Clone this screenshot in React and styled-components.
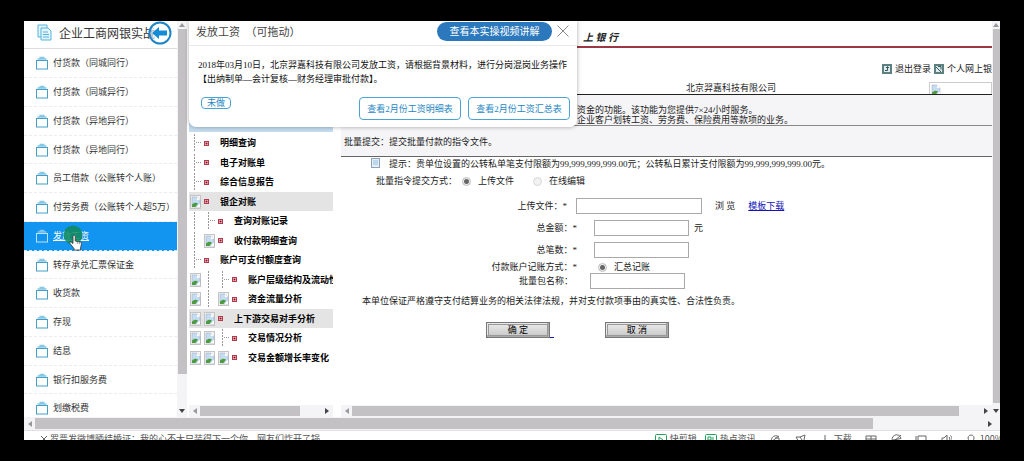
import React, { useState } from 'react';
import styled, { createGlobalStyle } from 'styled-components';

const GlobalStyle = createGlobalStyle`
  * { box-sizing: border-box; }
  body {
    margin: 0;
    background: #000;
    color: #222;
    font-family: "Liberation Serif", "Noto Sans CJK SC", sans-serif;
    font-size: 9px;
    line-height: 10px;
  }
  ul { list-style: none; margin: 0; padding: 0; }
  a { color: inherit; text-decoration: none; }
  h1, h2, p { margin: 0; font-weight: normal; }
  input, button { font: inherit; margin: 0; }
  svg { display: block; flex: none; }
`

const Page = styled.div`
  height: 100vh;
  padding: 21px 24px;
`

const Screen = styled.div`
  position: relative;
  display: flex;
  flex-direction: column;
  height: 100%;
  overflow: hidden;
  background: #fff;
`

const Frames = styled.div`
  flex: 1;
  display: flex;
  min-height: 0;
`

/* scroll bars */

const Bar = styled.div`
  flex: none;
  display: flex;
  align-items: center;
  overflow: hidden;
  background: #f4f3f5;
  flex-direction: ${props => props.$vertical ? 'column' : 'row'};
  ${props => props.$vertical ? 'width' : 'height'}: ${props => props.$size}px;
`

const Thumb = styled.div`
  align-self: stretch;
  flex: ${props => props.$grow};
  margin: ${props => props.$vertical ? '0 0 0 1px' : '1px 0'};
  background: #c3c1c4;
`

const Rest = styled.div`
  flex: ${props => props.$grow};
`

const ArrowCell = styled.div`
  flex: none;
  display: flex;
  align-items: center;
  justify-content: center;
  ${props => props.$vertical ? 'height' : 'width'}: ${props => props.$size}px;
`

const arrows = {
  left: 'M5 0 L1 3 L5 6 Z',
  right: 'M1 0 L5 3 L1 6 Z',
  up: 'M0 5 L3 1 L6 5 Z',
  down: 'M0 1 L6 1 L3 5 Z',
}

const Arrow = ({ dir, dim }) => (
  <svg width="6" height="6" viewBox="0 0 6 6"><path d={arrows[dir]} fill={dim ? '#999' : '#444'} /></svg>
)

const HScroll = ({ size, thumb, rest, end }) => (
  <Bar $size={size}>
    <ArrowCell $size={11}><Arrow dir="left" dim /></ArrowCell>
    <Thumb $grow={thumb} />
    <Rest $grow={rest} />
    <ArrowCell $size={end}><Arrow dir="right" /></ArrowCell>
  </Bar>
)

const VScroll = ({ size, thumb, rest }) => (
  <Bar $vertical $size={size}>
    <ArrowCell $vertical $size={8}><Arrow dir="up" dim /></ArrowCell>
    <Thumb $vertical $grow={thumb} />
    <Rest $grow={rest} />
    <ArrowCell $vertical $size={13}><Arrow dir="down" /></ArrowCell>
  </Bar>
)

/* left menu */

const Sidebar = styled.nav`
  flex: none;
  width: 153px;
  overflow: hidden;
  font-family: "Noto Sans CJK SC", sans-serif;
`

const SidebarHead = styled.div`
  position: relative;
  display: flex;
  align-items: center;
  gap: 7px;
  height: 28px;
  padding: 0 0 4px 13px;
  border-bottom: 1px solid #dcdcdc;
`

const SidebarTitle = styled.h1`
  font-size: 12px;
  line-height: 16px;
  white-space: nowrap;
  color: #333;
`

const BackButton = styled.button`
  position: absolute;
  left: 124px;
  top: 0;
  padding: 0;
  border: 0;
  background: none;
  cursor: pointer;
`

const MenuLink = styled.a`
  position: relative;
  display: flex;
  align-items: center;
  gap: 5px;
  height: 29px;
  padding-left: 12px;
  white-space: nowrap;
  border-bottom: 1px dashed ${props => props.$active ? '#cfe6fa' : '#ececec'};
  background: ${props => props.$active ? '#1295f0' : 'none'};
  color: ${props => props.$active ? '#fff' : '#333'};
  span { text-decoration: ${props => props.$active ? 'underline' : 'none'}; }
  li:nth-child(4n) & { height: 28px; }
`

const Pointer = styled.div`
  position: absolute;
  left: 39px;
  top: 2px;
`

/* tree frame */

const TreeFrame = styled.div`
  flex: none;
  display: flex;
  flex-direction: column;
  width: 144px;
  margin: 0 8px 0 2px;
`

const Tree = styled.ul`
  flex: 1;
  min-height: 0;
  overflow: hidden;
  padding-top: 93px;
`

const TreeSelected = styled.li`
  height: 18px;
  margin-bottom: 1px;
  background: #c3dcf0;
`

const TreeRow = styled.li`
  display: flex;
  align-items: center;
  height: 19px;
  padding-left: 1px;
  white-space: nowrap;
  font-weight: bold;
  color: #000;
  background: ${props => props.$shaded ? '#e4e4e4' : 'none'};
  &:nth-child(2n) { height: 20px; }
`

const Cell = styled.span`
  flex: none;
  display: flex;
  align-items: center;
  align-self: stretch;
  width: ${props => props.$wide ? 16 : 14}px;
`

/* main frame */

const ContentFrame = styled.div`
  flex: 1;
  display: flex;
  min-width: 0;
`

const ContentColumn = styled.div`
  flex: 1;
  display: flex;
  flex-direction: column;
  min-width: 0;
`

const Content = styled.main`
  flex: 1;
  min-height: 0;
  overflow: hidden;
`

const BankTitle = styled.div`
  height: 27px;
  padding: 11px 0 0 242px;
  border-bottom: 2px solid #9c3843;
  font: italic bold 10px/12px "Liberation Serif", "Noto Sans CJK SC", serif;
`

const UserLinks = styled.div`
  display: flex;
  align-items: center;
  justify-content: flex-end;
  gap: 3px;
  height: 14px;
  margin: 14px -9px 6px 0;
  white-space: nowrap;
`

const CompanyRow = styled.div`
  display: grid;
  grid-template-columns: 1fr auto 153px 63px;
  align-items: center;
  height: 13px;
  border-bottom: 1px solid #222;
`

const PhotoFrame = styled.div`
  grid-column: 4;
  height: 12px;
  overflow: hidden;
  border: 1px solid #ccc;
  border-bottom: 0;
`

const Intro = styled.div`
  padding: 10px 0 0 236px;
  background: #f5f4f7;
  border-bottom: 1px solid #888;
  white-space: nowrap;
`

const Notice = styled.div`
  padding: 11px 0 9px 3px;
  background: #f5f4f7;
  border-bottom: 1px solid #666;
`

const Hint = styled.div`
  display: flex;
  align-items: center;
  gap: 7px;
  height: 14px;
  padding-left: 29px;
  white-space: nowrap;
`

const ModeRow = styled.div`
  display: flex;
  align-items: center;
  height: 20px;
  padding-left: 35px;
  margin-bottom: 4px;
`

const Field = styled.div`
  display: grid;
  grid-template-columns: ${props => props.$label}px auto auto 1fr;
  align-items: center;
  column-gap: ${props => props.$gap}px;
  height: ${props => props.$height || 22}px;
`

const FieldLabel = styled.label`
  text-align: right;
  white-space: nowrap;
`

const TextBox = styled.input`
  width: ${props => props.$wide ? 126 : 95}px;
  height: 16px;
  padding: 0 2px;
  border: 1px solid #a9a9a9;
  background: #fff;
`

const Unit = styled.span`
  margin-left: -12px;
`

const Browse = styled.button`
  margin: 0 0 0 4px;
  padding: 0;
  border: 0;
  background: none;
  color: #222;
  cursor: pointer;
`

const Download = styled.a`
  color: #1414b8;
  text-decoration: underline;
  margin-left: 4px;
`

const Choice = styled.div`
  display: flex;
  align-items: center;
`

const Radio = styled.input`
  appearance: none;
  width: 9px;
  height: 9px;
  margin: 0 7px 0 ${props => props.$lead || 0}px;
  border: 1px solid ${props => props.disabled ? '#d8d8d8' : '#bbb'};
  border-radius: 50%;
  background: #f1f1f1;
  &:checked { background: radial-gradient(circle, #666 0 2px, #eee 3px); }
`

const Pledge = styled.p`
  margin: 7px 0 16px 21px;
  white-space: nowrap;
`

const Actions = styled.div`
  display: flex;
  align-items: flex-end;
  padding-left: 145px;
`

const FormButton = styled.button`
  width: 64px;
  height: 16px;
  padding: 0;
  border: 1px solid #777;
  outline: 1px solid #999;
  outline-offset: -3px;
  background: linear-gradient(#ececec, #c6c6c6);
  color: #000;
  line-height: 12px;
  box-shadow: inset -2px -2px 0 #aaa, inset 2px 2px 0 #e8e8e8;
`

const EmptyLink = styled.a`
  width: 4px;
  margin-right: 51px;
  border-bottom: 1px solid #1414b8;
`

/* task dialog */

const Dialog = styled.section`
  position: absolute;
  left: 165px;
  top: 0;
  width: 388px;
  border-radius: 0 0 7px 7px;
  background: #fff;
  box-shadow: 0 0 4px rgba(0, 0, 0, 0.35);
`

const DialogHead = styled.header`
  display: flex;
  align-items: center;
  height: 25px;
  padding: 0 8px 4px 7px;
  border-bottom: 1px solid #eaeaea;
  h2 { flex: 1; font: 11px/14px "Noto Sans CJK SC", sans-serif; color: #444; }
`

const VideoButton = styled.button`
  width: 115px;
  height: 19px;
  padding: 0;
  border: 0;
  border-radius: 10px;
  background: #2b78bd;
  color: #fff;
  font: 10px/16px "Noto Sans CJK SC", sans-serif;
`

const CloseButton = styled.button`
  margin-left: 5px;
  padding: 0;
  border: 0;
  background: none;
`

const DialogText = styled.p`
  padding: 12px 0 0 9px;
  line-height: 14px;
  white-space: nowrap;
  color: #111;
`

const DialogFoot = styled.footer`
  display: flex;
  align-items: flex-start;
  gap: 7px;
  padding: 11px 7px 7px 12px;
`

const Tag = styled.span`
  margin-right: auto;
  padding: 0 5px;
  border: 1px solid #4ba3d3;
  border-radius: 4px;
  color: #1f87c4;
`

const OutlineButton = styled.button`
  width: 102px;
  height: 23px;
  padding: 0;
  border: 1px solid #4ba3d3;
  border-radius: 4px;
  background: #fff;
  color: #1f87c4;
  white-space: nowrap;
`

/* browser status line */

const StatusBar = styled.footer`
  flex: none;
  height: 10px;
  overflow: hidden;
  border-top: 1px solid #e2e0e4;
  color: #555;
  font-family: "Noto Sans CJK SC", sans-serif;
`

const StatusLine = styled.div`
  display: flex;
  align-items: center;
  justify-content: space-between;
  height: 16px;
  padding-left: 14px;
  margin-right: -3px;
  white-space: nowrap;
`

const StatusGroup = styled.div`
  display: flex;
  align-items: center;
  gap: ${props => props.$gap}px;
`

/* icons */

const DocsIcon = () => (
  <svg width="15" height="17" viewBox="0 0 15 17" fill="#e3f4fb" stroke="#55b4dc">
    <path d="M1 1h9v12H1z" />
    <path d="M4 4h7l3 3v9H4z" />
    <path d="M6 8h5M6 10.500h6M6 13h6" />
  </svg>
)

const FolderIcon = ({ active }) => (
  <svg width="12" height="14" viewBox="0 0 12 14" fill="none">
    <path d="M3.500 1.500h5M1.500 3h9" stroke={active ? '#7cc6f8' : '#86c8e4'} strokeWidth="1.500" />
    <rect x="0.500" y="4.500" width="11" height="8.500" stroke={active ? '#bfe2fb' : '#459fc6'} />
  </svg>
)

const BackIcon = () => (
  <svg width="24" height="24" viewBox="0 0 24 24">
    <circle cx="12" cy="12" r="10.500" fill="#fff" fillOpacity="0.6" stroke="#1c86c8" strokeWidth="2" />
    <path d="M4 12l7-6v3.500h8v5h-8V18z" fill="#148cd6" />
  </svg>
)

const HandPointer = () => (
  <svg width="24" height="28" viewBox="0 0 24 28">
    <circle cx="10" cy="11" r="9.500" fill="#0e8a5a" fillOpacity="0.85" />
    <path d="M10 12.500c0-1.600 2.200-1.600 2.200 0v4.500l5 1c1 .3 1.300 1 1.200 2l-.8 4v2H11v-1.500l-4-5c-.8-1.200.6-2 1.500-1.200L10 19.500z" fill="#fff" stroke="#333" strokeWidth="0.8" />
    <path d="M14.300 17.500v2.500M16.300 18v2.200" stroke="#555" strokeWidth="0.6" />
  </svg>
)

const BrokenImage = ({ bare }) => (
  <svg width="12" height="14" viewBox="0 0 12 14">
    {!bare && <rect x="0.500" y="0.500" width="10" height="13" fill="#f4f4f4" stroke="#c4c4c4" />}
    <path d="M2 2h5l3 3v7H2z" fill="#c5dcf3" stroke="#9aaabb" strokeWidth="0.5" />
    <path d="M7 2v3h3z" fill="#fff" />
    <path d="M2 12V9.500c2-2 4-2.500 6-1L5.500 12z" fill="#4c9c3f" />
    <path d="M6.500 12L10 8.500V12z" fill="#fff" />
  </svg>
)

const HintIcon = () => (
  <svg width="12" height="12" viewBox="0 0 12 12">
    <rect x="1.500" y="0.500" width="8" height="9" fill="#e4eef8" stroke="#8fa3b8" />
    <path d="M3 2h5v5H3z" fill="#bcd6ee" />
  </svg>
)

const TreeLine = ({ branch }) => (
  <svg width="14" height="18" viewBox="0 0 14 18" stroke="#999" strokeDasharray="2 1">
    <path d="M4.500 0v18" />
    {branch && <path d="M6 8.500h6" strokeDasharray="1 1" />}
  </svg>
)

const NodeIcon = () => (
  <svg width="5" height="5" viewBox="0 0 5 5">
    <rect x="0.500" y="0.500" width="4" height="4" fill="#fbe3e6" stroke="#b33a4a" />
    <rect x="1.500" y="1.500" width="2" height="2" fill="#8b0f20" />
  </svg>
)

const LinkIcon = ({ flip }) => (
  <svg width="10" height="10" viewBox="0 0 10 10">
    <rect width="10" height="10" fill="#5d8080" />
    <rect x="2" y="2" width="6" height="6" fill="#dfeaea" />
    <path d={flip ? 'M2 3l5 5M4 2.500h3v3' : 'M3 6.500h2.500V3M4 4l1.500-1.500L7 4'} stroke="#33595b" fill="none" />
  </svg>
)

const CloseIcon = () => (
  <svg width="12" height="12" viewBox="0 0 12 12"><path d="M0.500 0.500l11 11M11.500 0.500l-11 11" stroke="#888" /></svg>
)

const statusShapes = {
  close: 'M3 3l6 6M9 3l-6 6',
  speed: 'M11 9a4.500 4.500 0 1 1-1-5M2 9l8-6M6 5h4v6',
  rocket: 'M2 4h4l5-2-1 5-4 4zM6 4l2 3M3 9l-1 2',
  download: 'M6 2v8M3 7l3 3 3-3M1 8v4h10V8',
  shield: 'M1 3h10v5H1zM6 3v8M1 6h10',
  globe: 'M10.500 8.500a4.500 4.500 0 1 1 .5-3L3 7M2 10L11 2',
  window: 'M3 3h8v9H3zM1 3v6',
  sound: 'M2 5h2l3-3v9L4 8H2zM9 4c1 1 1 3 0 5M10.500 2.500c2 2 2 6 0 8',
  zoom: 'M6 2a3 3 0 1 0 .1 0M6 8v4',
}

const StatusIcon = ({ name }) => (
  <svg width="12" height="12" viewBox="0 0 12 12" fill="none" stroke="#666"><path d={statusShapes[name]} /></svg>
)

const GreenIcon = ({ d }) => (
  <svg width="12" height="12" viewBox="0 0 12 12" fill="none" stroke="#1fa35a">
    <rect x="0.500" y="1.500" width="11" height="10" rx="1" />
    <path d={d} />
  </svg>
)

const menu = [
  '付货款（同城同行）',
  '付货款（同城异行）',
  '付货款（异地异行）',
  '付货款（异地同行）',
  '员工借款（公账转个人账）',
  '付劳务费（公账转个人超5万）',
  '发放工资',
  '转存承兑汇票保证金',
  '收货款',
  '存现',
  '结息',
  '银行扣服务费',
  '划缴税费',
]

// prefix: b = branch, l = line, i = image
const tree = [
  { prefix: 'b', text: '明细查询' },
  { prefix: 'b', text: '电子对账单' },
  { prefix: 'b', text: '综合信息报告' },
  { prefix: 'i', text: '银企对账', shaded: true },
  { prefix: 'lb', text: '查询对账记录' },
  { prefix: 'li', text: '收付款明细查询' },
  { prefix: 'b', text: '账户可支付额度查询' },
  { prefix: 'ilb', text: '账户层级结构及流动性' },
  { prefix: 'ili', text: '资金流量分析' },
  { prefix: 'ii', text: '上下游交易对手分析', shaded: true },
  { prefix: 'iib', text: '交易情况分析' },
  { prefix: 'iii', text: '交易金额增长率变化' },
]

const Menu = () => {
  const [ active, setActive ] = useState(6)

  return (
    <Sidebar>
      <SidebarHead>
        <DocsIcon />
        <SidebarTitle>企业工商网银实战</SidebarTitle>
        <BackButton aria-label="返回"><BackIcon /></BackButton>
      </SidebarHead>
      <ul>
        {menu.map((text, i) => (
          <li key={text}>
            <MenuLink href="#" $active={i === active} onClick={() => setActive(i)}>
              <FolderIcon active={i === active} />
              <span>{text}</span>
              {i === active && <Pointer><HandPointer /></Pointer>}
            </MenuLink>
          </li>
        ))}
      </ul>
    </Sidebar>
  )
}

const TreeMenu = () => (
  <TreeFrame>
    <Tree>
      <TreeSelected />
      {tree.map(row => (
        <TreeRow key={row.text} $shaded={row.shaded}>
          {row.prefix.split('').map((type, i) => (
            <Cell key={i}>{type === 'i' ? <BrokenImage /> : <TreeLine branch={type === 'b'} />}</Cell>
          ))}
          <Cell $wide><NodeIcon /></Cell>
          <a href="#">{row.text}</a>
        </TreeRow>
      ))}
    </Tree>
    <HScroll size={12} thumb={100} rest={20} end={13} />
  </TreeFrame>
)

const PayForm = () => (
  <form onSubmit={e => e.preventDefault()}>
    <Hint>
      <HintIcon />
      <span>提示：贵单位设置的公转私单笔支付限额为99,999,999,999.00元；公转私日累计支付限额为99,999,999,999.00元。</span>
    </Hint>
    <ModeRow>
      <span>批量指令提交方式：</span>
      <Radio $lead={5} type="radio" name="mode" id="upload" defaultChecked />
      <label htmlFor="upload">上传文件</label>
      <Radio $lead={19} type="radio" name="mode" id="online" disabled />
      <label htmlFor="online">在线编辑</label>
    </ModeRow>
    <Field $label={226} $gap={9}>
      <FieldLabel htmlFor="file">上传文件：*</FieldLabel>
      <TextBox $wide id="file" />
      <Browse type="button">浏 览</Browse>
      <div><Download href="#">模板下载</Download></div>
    </Field>
    <Field $label={236} $gap={17}>
      <FieldLabel htmlFor="amount">总金额：*</FieldLabel>
      <TextBox id="amount" />
      <Unit>元</Unit>
    </Field>
    <Field $label={236} $gap={17}>
      <FieldLabel htmlFor="count">总笔数：*</FieldLabel>
      <TextBox id="count" />
    </Field>
    <Field $label={236} $gap={21} $height={12}>
      <FieldLabel as="span">付款账户记账方式：*</FieldLabel>
      <Choice>
        <Radio type="radio" name="account" id="summary" defaultChecked />
        <label htmlFor="summary">汇总记账</label>
      </Choice>
    </Field>
    <Field $label={232} $gap={17} $height={16}>
      <FieldLabel htmlFor="batch">批量包名称：</FieldLabel>
      <TextBox id="batch" />
    </Field>
    <Pledge>本单位保证严格遵守支付结算业务的相关法律法规，并对支付款项事由的真实性、合法性负责。</Pledge>
    <Actions>
      <FormButton>确 定</FormButton>
      <EmptyLink href="#" aria-label="更多" />
      <FormButton type="button">取 消</FormButton>
    </Actions>
  </form>
)

const TaskDialog = ({ onClose }) => (
  <Dialog>
    <DialogHead>
      <h2>发放工资　（可拖动）</h2>
      <VideoButton>查看本实操视频讲解</VideoButton>
      <CloseButton aria-label="关闭" onClick={onClose}><CloseIcon /></CloseButton>
    </DialogHead>
    <DialogText>
      2018年03月10日，北京羿嘉科技有限公司发放工资，请根据背景材料，进行分岗混岗业务操作<br />
      【出纳制单—会计复核—财务经理审批付款】。
    </DialogText>
    <DialogFoot>
      <Tag>未做</Tag>
      <OutlineButton>查看2月份工资明细表</OutlineButton>
      <OutlineButton>查看2月份工资汇总表</OutlineButton>
    </DialogFoot>
  </Dialog>
)

const App = () => {
  const [ open, setOpen ] = useState(true)

  return (
    <Page>
      <GlobalStyle />
      <Screen>
        <Frames>
          <Menu />
          <VScroll size={10} thumb={344} rest={30} />
          <TreeMenu />
          <ContentFrame>
            <ContentColumn>
              <Content>
                <BankTitle>上 银 行</BankTitle>
                <UserLinks>
                  <LinkIcon />
                  <a href="#">退出登录</a>
                  <LinkIcon flip />
                  <a href="#">个人网上银行</a>
                </UserLinks>
                <CompanyRow>
                  <span />
                  <span>北京羿嘉科技有限公司</span>
                  <PhotoFrame><BrokenImage bare /></PhotoFrame>
                </CompanyRow>
                <Intro>
                  资金的功能。该功能为您提供7×24小时服务。<br />
                  企业客户划转工资、劳务费、保险费用等款项的业务。
                </Intro>
                <Notice>批量提交：提交批量付款的指令文件。</Notice>
                <PayForm />
              </Content>
              <HScroll size={12} thumb={607} rest={20} end={13} />
            </ContentColumn>
            <VScroll size={8} thumb={374} rest={1} />
          </ContentFrame>
        </Frames>
        <HScroll size={13} thumb={838} rest={106} end={21} />
        <StatusBar>
          <StatusLine>
            <StatusGroup $gap={0}>
              <StatusIcon name="close" />
              <span>罗晋发微博晒结婚证：我的心不大只装得下一个你，网友们炸开了锅</span>
            </StatusGroup>
            <StatusGroup $gap={13}>
              <StatusGroup $gap={8}>
                <StatusGroup $gap={3}><GreenIcon d="M4 4l4 3-4 3z" />快剪辑</StatusGroup>
                <StatusGroup $gap={3}><GreenIcon d="M3 4h3v3H3zM8 4v5" />热点资讯</StatusGroup>
              </StatusGroup>
              <StatusIcon name="speed" />
              <StatusIcon name="rocket" />
              <StatusGroup $gap={3}><StatusIcon name="download" />下载</StatusGroup>
              <StatusIcon name="shield" />
              <StatusIcon name="globe" />
              <StatusIcon name="window" />
              <StatusIcon name="sound" />
              <StatusGroup $gap={3}><StatusIcon name="zoom" />100%</StatusGroup>
            </StatusGroup>
          </StatusLine>
        </StatusBar>
        {open && <TaskDialog onClose={() => setOpen(false)} />}
      </Screen>
    </Page>
  )
}

export default App;
